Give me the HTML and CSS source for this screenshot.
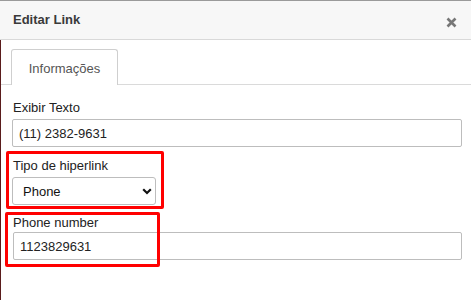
FILE: index.html
```html
<!DOCTYPE html>
<html lang="pt">
<head>
<meta charset="utf-8">
<link rel="stylesheet" href="styles.css">
</head>
<body>
<div class="dialog">
  <div class="header">
    <span class="title">Editar Link</span>
    <span class="close">
      <svg width="11" height="11" viewBox="0 0 11 11"><path d="M1.5 1.5 L9.5 9.5 M9.5 1.5 L1.5 9.5" stroke="#777" stroke-width="2.6" stroke-linecap="butt"/></svg>
    </span>
  </div>
  <div class="body">
    <div class="tabs">
      <div class="tab">Informações</div>
    </div>
    <div class="form">
      <label class="label l1">Exibir Texto</label>
      <input class="input i1" type="text" value="(11) 2382-9631">
      <label class="label l2">Tipo de hiperlink</label>
      <div class="select-wrap">
        <select class="select"><option>Phone</option></select>
        <svg class="chev" width="10" height="7" viewBox="0 0 10 7"><path d="M1.2 1.3 L5 5 L8.8 1.3" fill="none" stroke="#111" stroke-width="2.2"/></svg>
      </div>
      <label class="label l3">Phone number</label>
      <input class="input i3" type="text" value="1123829631">
    </div>
  </div>
  <div class="mark m1"></div>
  <div class="mark m2"></div>
</div>
</body>
</html>
```
FILE: styles.css
```css
html, body {
  margin: 0;
  padding: 0;
  background: #fff;
}
body {
  font-family: "Liberation Sans", Arial, sans-serif;
  font-size: 13px;
  color: #222;
  width: 471px;
  height: 300px;
  overflow: hidden;
}
.dialog {
  position: relative;
  height: 300px;
}
.header {
  height: 38px;
  border-top: 1px solid #9a9a9a;
  border-bottom: 1px solid #d9d9d9;
  background: #f7f7f7;
  display: flex;
  align-items: center;
  justify-content: space-between;
  padding: 0 14px 0 13px;
}
.title {
  font-size: 13px;
  font-weight: bold;
  color: #3a3a3a;
  padding-bottom: 2px;
}
.close {
  display: flex;
  padding-top: 4px;
}
.body {
  border-left: 1px solid #5a1c1c;
  height: 260px;
}
.tabs {
  padding-top: 9px;
  padding-left: 10px;
  border-bottom: 1px solid #dadada;
  display: flex;
}
.tab {
  width: 105px;
  height: 34px;
  border: 1px solid #cfcfcf;
  border-bottom: none;
  border-radius: 3px 3px 0 0;
  background: #fff;
  margin-bottom: -1px;
  display: flex;
  align-items: center;
  justify-content: center;
  color: #555;
  font-size: 13px;
  padding-top: 1px;
  box-sizing: content-box;
}
.form {
  padding-left: 11px;
  display: flex;
  flex-direction: column;
  align-items: flex-start;
}
.label {
  display: block;
  line-height: 16px;
  font-size: 13px;
  color: #222;
  margin-left: 1px;
}
.l1 { margin-top: 15px; }
.l2 { margin-top: 11px; }
.l3 { margin-top: 10px; }
.input {
  box-sizing: border-box;
  height: 28px;
  border: 1px solid #bdbdbd;
  border-radius: 2px;
  font-family: "Liberation Sans", Arial, sans-serif;
  font-size: 13px;
  color: #222;
  padding: 0 6px;
  margin: 0;
  outline: none;
  background: #fff;
}
.i1 {
  width: 450px;
  margin-top: 3px;
}
.i3 {
  width: 449px;
  margin-top: 1px;
  margin-left: 1px;
}
.select-wrap {
  position: relative;
  margin-top: 3px;
  width: 144px;
  height: 28px;
}
.select {
  -webkit-appearance: none;
  appearance: none;
  box-sizing: border-box;
  width: 144px;
  height: 28px;
  border: 1px solid #bdbdbd;
  border-radius: 3px;
  background: #fff;
  font-family: "Liberation Sans", Arial, sans-serif;
  font-size: 13px;
  color: #111;
  padding: 0 0 0 10px;
  margin: 0;
  outline: none;
}
.chev {
  position: absolute;
  left: 130px;
  top: 11px;
}
.mark {
  position: absolute;
  border: 3px solid #ff0000;
  border-radius: 2px;
  box-sizing: border-box;
}
.m1 {
  left: 6px;
  top: 151px;
  width: 158px;
  height: 58px;
}
.m2 {
  left: 5px;
  top: 212px;
  width: 155px;
  height: 55px;
}
```
